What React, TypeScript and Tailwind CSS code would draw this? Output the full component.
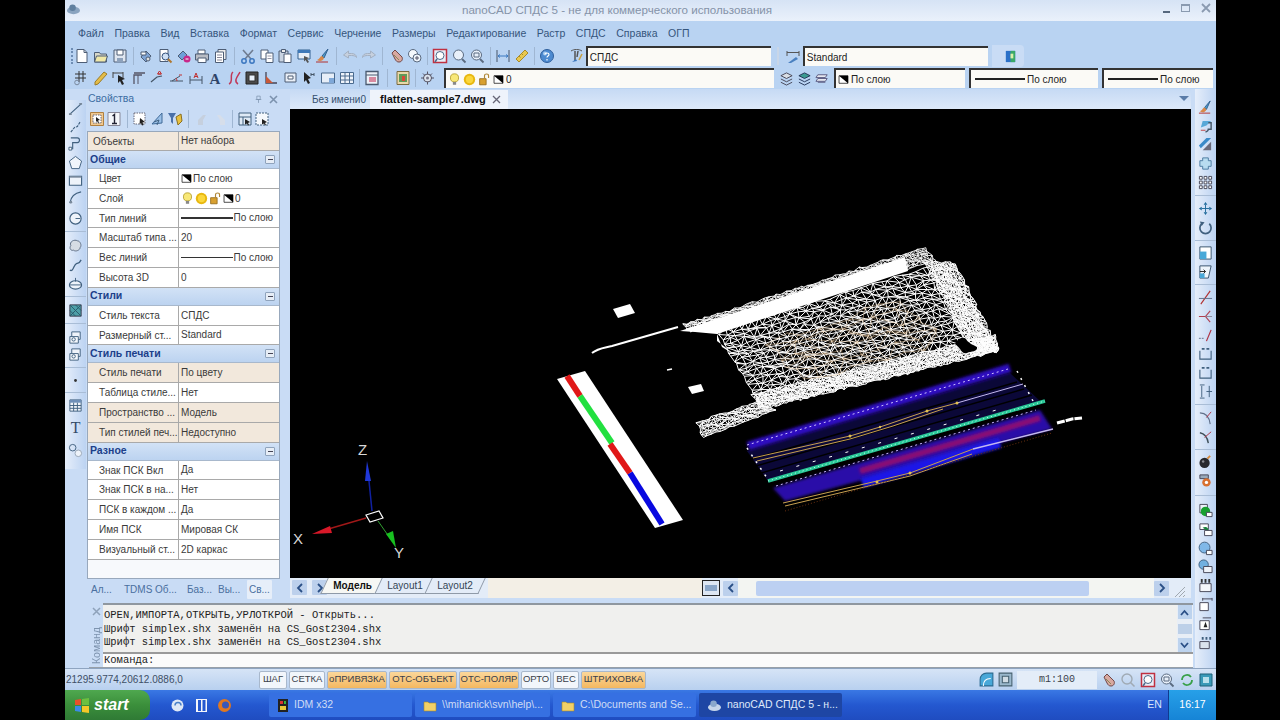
import { ReactNode } from "react"

const stroke = "#4d5d75"

const glyphs: Record<string, ReactNode> = {
  new: <><path d="M3 1.5h7l3 3v10H3z" fill="#fff" stroke={stroke} /><path d="M10 1.5v3h3" fill="none" stroke={stroke} /></>,
  open: <><path d="M1.5 4.5h5l1 1.5h6v8h-12z" fill="#d8d8c8" stroke={stroke} /><path d="M3.5 8h11l-2 6h-11z" fill="#f0e8a8" stroke={stroke} /></>,
  save: <><path d="M2 2h12v12H2z" fill="#dfe6f0" stroke={stroke} /><path d="M5 2h6v5H5z" fill="#fff" stroke={stroke} /><path d="M5 10h6v4H5z" fill="#8ea2bc" /></>,
  plot: <><path d="M3 9l5-6 5 5-5 6z" fill="#7fa4d4" stroke={stroke} /><path d="M3 4h5v3H3z" fill="#fff" stroke={stroke} /><circle cx="10" cy="11" r="2" fill="#e0e0e0" stroke={stroke} /></>,
  preview: <><path d="M3 1.5h8v12H3z" fill="#fff" stroke={stroke} /><circle cx="8.5" cy="8.5" r="3.5" fill="#cfe0f4" stroke="#33507a" /><path d="M11 11l3.5 3.5" stroke="#b07830" strokeWidth="2" /></>,
  plot2: <><path d="M2 8l5-5 4 4-5 5z" fill="#6f9fd8" stroke={stroke} /><circle cx="11" cy="11" r="3.5" fill="#c8288a" /><path d="M9.5 11h3" stroke="#fff" /></>,
  print: <><path d="M4 2h7v4H4z" fill="#fff" stroke={stroke} /><path d="M1.5 6h13v6h-13z" fill="#b8bcc4" stroke={stroke} /><path d="M4 10h8v4.5H4z" fill="#fff" stroke={stroke} /></>,
  print2: <><path d="M5 1.5h8v10H5z" fill="#eee" stroke={stroke} /><path d="M2.5 4h8v10.5h-8z" fill="#fff" stroke={stroke} /><path d="M4 7h5M4 9.5h5M4 12h5" stroke="#889" /></>,
  cut: <><path d="M3 2l8 9M13 2l-8 9" stroke="#6f7c90" strokeWidth="1.6" /><circle cx="4" cy="13" r="2.2" fill="none" stroke="#3d78c0" strokeWidth="1.5" /><circle cx="12" cy="13" r="2.2" fill="none" stroke="#3d78c0" strokeWidth="1.5" /></>,
  copy: <><path d="M2 2h7v9H2z" fill="#fff" stroke={stroke} /><path d="M7 5h7v9.5H7z" fill="#fff" stroke={stroke} /><path d="M8.5 8h4M8.5 10.5h4" stroke="#99a" /></>,
  paste: <><path d="M2 3h9v11H2z" fill="#c9d4e2" stroke={stroke} /><path d="M4.5 1.5h4v3h-4z" fill="#eee" stroke={stroke} /><path d="M7 6h7v8.5H7z" fill="#fff" stroke={stroke} /></>,
  card: <><path d="M2 2h12v9H2z" fill="#e6eef8" stroke="#33608f" /><path d="M2 2h12v3H2z" fill="#3d78b8" /><path d="M8 8l5 2-2 1 2 3-1.5 1-2-3-1.5 1.5z" fill="#555" /></>,
  undo: <><path d="M1.5 7l5-4v2.5h3c3 0 5 1.5 5 4-1-1.5-3-2-5-2h-3V10z" fill="#c6d0de" stroke="#a3b0c2" /></>,
  redo: <><path d="M14.5 7l-5-4v2.5h-3c-3 0-5 1.5-5 4 1-1.5 3-2 5-2h3V10z" fill="#c6d0de" stroke="#a3b0c2" /></>,
  hand: <><path d="M3 5l3-3 7 7c1 2 0 5-3 5-2 0-3-1-4-3z" fill="#d8a8a0" stroke="#704848" /><path d="M5 7l5 5" stroke="#885" /></>,
  zoomRt: <><circle cx="6" cy="6" r="4.5" fill="#f4f8fc" stroke="#5a6a80" /><circle cx="10" cy="10" r="4" fill="#eef4fa" stroke="#5a6a80" /><path d="M8 10h4M10 8v4" stroke="#556" /></>,
  zoomWin: <><path d="M1.5 1.5h13v13h-13z" fill="#e8eef8" stroke="#c03040" strokeWidth="1.5" /><circle cx="8" cy="7.5" r="4" fill="#fff" stroke="#4d6a8a" /><path d="M5 11l-2 3" stroke="#4d6a8a" strokeWidth="1.5" /></>,
  zoomPrev: <><circle cx="7.5" cy="7" r="5" fill="#e8f0fa" stroke="#5a6a80" /><path d="M11 11l3.5 3.5" stroke="#5a6a80" strokeWidth="1.8" /></>,
  zoomAll: <><circle cx="7.5" cy="7" r="5" fill="#e8f0fa" stroke="#5a6a80" /><path d="M5 5h5v4H5z" fill="none" stroke="#5a6a80" /><path d="M11 11l3.5 3.5" stroke="#5a6a80" strokeWidth="1.8" /></>,
  dim: <><path d="M2 2v12M14 2v12" stroke="#5a6a80" strokeWidth="1.2" /><path d="M3 8h10M3 8l2-1.5M3 8l2 1.5M13 8l-2-1.5M13 8l-2 1.5" stroke="#3a78c0" /></>,
  ruler: <><path d="M2 11l9-9 3 3-9 9z" fill="#e8c850" stroke="#a88a28" /><path d="M5 8l1.5 1.5M7.5 5.5L9 7" stroke="#a88a28" /></>,
  help: <><circle cx="8" cy="8" r="6.5" fill="#4c8ad0" stroke="#2f5f9c" /><circle cx="6" cy="5.5" r="2" fill="#a8ccf0" /><path d="M6 6.5c0-2 4-2 4 0 0 1.5-2 1.5-2 3M8 11v1.5" fill="none" stroke="#fff" strokeWidth="1.2" /></>,
  txtStyle: <><path d="M3 3c3-2 8-2 11 0" fill="none" stroke="#555" /><path d="M7 3v10M10 3L9 9" stroke="#555" strokeWidth="1.5" /><path d="M4 14l4-3 1 2z" fill="#3a78c0" /><path d="M11 12l3-6" stroke="#c9a040" strokeWidth="1.6" /></>,
  dimStyle: <><path d="M2 3v5M14 3v5M2 4.5h12" stroke="#555" /><path d="M3 15l8-6 2 2-7 4z" fill="#4a80c0" /></>,
  book: <><path d="M3 2h10v12H3z" fill="#2a70c8" /><path d="M8 2h5v12H8z" fill="#38a868" /><path d="M8 5h3v5H8z" fill="#d8f0a8" /></>,
  grid: <><path d="M5 1v11M9 1v11M1 4h11M1 8h11" stroke="#333" /><circle cx="3" cy="12.5" r="2.3" fill="none" stroke="#7a8aa0" /></>,
  pencil: <><path d="M2 12L11 2l3 2-9 10-3 1z" fill="#e4bc48" stroke="#9a7c28" /></>,
  dimSel: <><path d="M1 2v6M11 2v6M1 3h10" stroke="#444" /><path d="M6 5l7 4-3 1 2 4-2 1-2-4-2 2z" fill="#222" /></>,
  ortho: <><path d="M3 14V5h8M3 3h11" stroke="#556" strokeWidth="1.3" fill="none" /><path d="M7 5v9" stroke="#556" /></>,
  aligned: <><path d="M1 12l6-5 5-1" fill="none" stroke="#456" strokeWidth="1.2" /><path d="M8 4h3M9.5 1l2 3h-4z" fill="none" stroke="#c03030" /></>,
  angular: <><path d="M1 11h13M3 11l8-5" stroke="#456" /><path d="M8 11c0-1-.5-2-1-3" fill="none" stroke="#c03030" /><path d="M10 5h3" stroke="#c03030" /></>,
  linA: <><path d="M2 6v8M14 6v8M2 10h12" stroke="#456" /><path d="M6 8l2-5 2 5M6.8 6.5h2.4" stroke="#c03030" fill="none" /></>,
  letter: <text x="8" y="13.5" textAnchor="middle" fontSize="15" fontWeight="700" fontFamily="'Liberation Serif', serif" fill="#2f4468">A</text>,
  bigT: <text x="8" y="14" textAnchor="middle" fontSize="17" fontFamily="'Liberation Serif', serif" fill="#334a66">T</text>,
  curve: <><path d="M3 14c5-2 0-9 4-12M12 14c-5-3 0-8 2-12" fill="none" stroke="#c03858" strokeWidth="1.5" /></>,
  hatch: <><path d="M2 2h12v12H2z" fill="#4a4a4a" stroke="#222" /><path d="M5 5h6v6H5z" fill="#e8f0fa" stroke="#333" /></>,
  corner: <><path d="M3 2v11h11" fill="none" stroke="#445" strokeWidth="1.3" /><path d="M3 13V6l7 7z" fill="#c85838" /></>,
  flag: <><path d="M3 3h11v9H3z" fill="#e8eef6" stroke={stroke} /><path d="M6 6h5v3H6z" fill="#fff" stroke={stroke} /></>,
  cursor: <><path d="M3 2l7 6-3 1 2 4-2 1-2-4-2 2z" fill="#222" /><path d="M10 3v3M13 3v3M10 4.5h3" stroke="#456" /></>,
  win1: <><path d="M1.5 3h13v10h-13z" fill="#e6eef8" stroke="#4a6a8e" /><path d="M9 8h5v5H9z" fill="#7fa8d8" /></>,
  win2: <><path d="M1.5 2.5h13v11h-13z" fill="#eef3fa" stroke="#4a6a8e" /><path d="M1.5 6h13M1.5 10h13M6 2.5v11M10.5 2.5v11" stroke="#4a6a8e" /></>,
  frame: <><path d="M2 1.5h12v13H2z" fill="#eef2f8" stroke="#4a5a70" strokeWidth="1.3" /><path d="M2 5h12" stroke="#4a5a70" /><path d="M5 7h7v5H5z" fill="#d88aa0" /></>,
  clip: <><path d="M2 1.5h12v13H2z" fill="#e8d8a8" stroke="#7a6a40" /><path d="M4 4h8v8H4z" fill="#5f9a58" /><path d="M7 6h3v5H7z" fill="#d84838" /></>,
  gear: <><circle cx="7.5" cy="8" r="4" fill="#dce4ee" stroke="#556" /><path d="M7.5 1.5v3M7.5 11.5v3M1 8h3M11 8h3M3 3.5l2 2M12 3.5l-2 2" stroke="#556" /><circle cx="7.5" cy="8" r="1.5" fill="#778" /></>,
  bulb: <><circle cx="8" cy="6" r="5" fill="#f8e878" stroke="#b09a28" /><path d="M6 11h4v3.5H6z" fill="#888" /></>,
  sun: <><circle cx="8" cy="8" r="7" fill="#e8b810" /><circle cx="8" cy="8" r="4.5" fill="#fbd73c" /></>,
  lock: <><path d="M2 7h8v7.5H2z" fill="#d8a030" stroke="#906818" /><path d="M8 7V3.5c0-3 5-3 5 0V6" fill="none" stroke="#b08838" strokeWidth="1.4" /></>,
  color: <><path d="M1.5 2.5h13v11h-13z" fill="#fff" stroke="#000" /><path d="M1.5 2.5h13v11z" fill="#000" /></>,
  layer: <><path d="M2 5l6-3 6 3-6 3z" fill="#d8dde4" stroke="#445" /><path d="M2 8.5l6 3 6-3M2 12l6 3 6-3" fill="none" stroke="#445" /></>,
  layer2: <><path d="M2 5l6-3 6 3-6 3z" fill="#3a9a90" stroke="#235" /><path d="M2 8.5l6 3 6-3M2 12l6 3 6-3" fill="none" stroke="#235" /></>,
  layer3: <><path d="M3 4h10l-2 3H1zM3 8h10l-2 3H1z" fill="#e6e8f0" stroke="#5a5a80" /><path d="M3 12h8" stroke="#5a5a80" /></>,
  line: <><path d="M2 14L14 3" stroke="#40607f" strokeWidth="1.2" /><path d="M1 13h3v2H1zM12 2h3v2h-3z" fill="#7a8a9c" /></>,
  pline: <><path d="M3 14l4-5 3-1 3-5" fill="none" stroke="#40607f" strokeWidth="1.2" strokeDasharray="3 1" /></>,
  mline: <><path d="M3 2h7c3 0 3 5 0 5H5v7" fill="none" stroke="#40607f" strokeWidth="1.2" /><path d="M1 12h3v3H1z" fill="#fff" stroke="#40607f" /></>,
  poly: <><path d="M8 1.5l6.5 5-2.5 8H4l-2.5-8z" fill="#f0f5fb" stroke="#40607f" /></>,
  rect: <><path d="M1.5 3.5h13V13h-13z" fill="#eef3fa" stroke="#40607f" strokeWidth="1.2" /><path d="M1.5 3.5h13V5h-13z" fill="#7a8a9c" /></>,
  arc: <><path d="M2 14C3 7 8 3 14 2" fill="none" stroke="#40607f" strokeWidth="1.2" /><circle cx="3" cy="13" r="1.5" fill="#7a8a9c" /></>,
  circle: <><circle cx="8" cy="8" r="6" fill="#eef3fa" stroke="#40607f" strokeWidth="1.2" /><path d="M8 8h5" stroke="#40607f" /></>,
  cloud: <><path d="M3 8c-2-4 4-7 7-5 3 0 5 5 3 7 0 3-5 5-7 3-3 1-5-2-3-5z" fill="#d6dce4" stroke="#5a6a80" /></>,
  spline: <><path d="M2 13c4 2 4-6 7-7s3 0 5-4" fill="none" stroke="#40607f" strokeWidth="1.4" /></>,
  ellipse: <><ellipse cx="8" cy="9.5" rx="6.5" ry="4.5" fill="#eef3fa" stroke="#40607f" strokeWidth="1.2" /><path d="M8 2v4M1.5 9.5h13" stroke="#40607f" /></>,
  tile: <><path d="M2 2h12v12H2z" fill="#4ea0a8" stroke="#334" /><path d="M2 2l12 12M8 2l6 6M2 8l6 6M14 2L2 14" stroke="#2a5a6a" /></>,
  block: <><path d="M4 2h9v8H4z" fill="#eef3fa" stroke="#40607f" /><path d="M2 7h9v7H2z" fill="#f4f8fc" stroke="#40607f" /><circle cx="6" cy="10" r="1.8" fill="none" stroke="#40607f" /></>,
  dot: <><circle cx="8" cy="8" r="1.5" fill="#333" /></>,
  table: <><path d="M2 2h12v12H2z" fill="#f0f4fa" stroke="#40607f" /><path d="M2 2h12v3H2z" fill="#7090b8" /><path d="M2 8h12M2 11h12M6 5v9M10 5v9" stroke="#40607f" /></>,
  rings: <><circle cx="5" cy="5" r="3.5" fill="none" stroke="#40607f" /><circle cx="11" cy="11" r="3.5" fill="#eef3fa" stroke="#9aa8b8" /></>,
  paint: <><path d="M13 1L7 8l2 2z" fill="#4a9ac8" stroke="#33608f" /><path d="M7 8c-2 0-2 3-5 4 3 2 6 1 7-2z" fill="#d88848" /><path d="M1 14h12" stroke="#b03030" /></>,
  copy3: <><path d="M5 2L3 9l6-2 5-5z" fill="#58a8d8" /><path d="M11 4h3v7h-3c0 2-3 3-3 3" fill="none" stroke="#456" strokeWidth="1.5" /><path d="M3 12h5" stroke="#c04040" /></>,
  mirror: <><path d="M1 9l8-8h5L3 12z" fill="#3a8ac8" /><path d="M14 5v9H5z" fill="#6a6a7a" /></>,
  offset: <><path d="M5 2h6v3h3v6h-3v3H5v-3H2V5h3z" fill="#b8dcf0" stroke="#4a7aa0" /></>,
  array: <><path d="M1.5 1.5h3v3h-3zM6.5 1.5h3v3h-3zM11.5 1.5h3v3h-3zM1.5 6.5h3v3h-3zM6.5 6.5h3v3h-3zM11.5 6.5h3v3h-3zM1.5 11.5h3v3h-3zM6.5 11.5h3v3h-3zM11.5 11.5h3v3h-3z" fill="#fff" stroke="#445" /></>,
  move: <><path d="M8 1l2 3H6zM8 15l-2-3h4zM1 8l3-2v4zM15 8l-3 2V6z" fill="#1f6a9a" /><path d="M8 4v8M4 8h8" stroke="#1f6a9a" /></>,
  rotate: <><path d="M4 4a6 6 0 1 0 8 0" fill="none" stroke="#40607f" strokeWidth="1.8" /><path d="M2 1.5l5 1-3 4z" fill="#40607f" /></>,
  scale: <><path d="M2 2h12v13H2z" fill="#fff" stroke="#34506a" /><path d="M2 7h7v8H2z" fill="#48a8d8" /></>,
  stretch: <><path d="M2 2h12l-3 13H2z" fill="#eef5fb" stroke="#34506a" /><path d="M2 10h5v5H2z" fill="#48a8d8" /><path d="M2 8h6M6 6l2 2-2 2" stroke="#222" fill="none" /></>,
  trim: <><path d="M13 1L3 15" stroke="#b03030" strokeWidth="1.2" /><path d="M1 9h14" stroke="#60708a" /></>,
  extend: <><path d="M13 2L8 8l5 6M1 8h7" fill="none" stroke="#b04050" strokeWidth="1.2" /><path d="M8 8h7" stroke="#889" /></>,
  break: <><path d="M1 11h6" stroke="#60708a" strokeDasharray="2 1" /><path d="M14 2L9 14" stroke="#b03040" strokeWidth="1.3" /></>,
  join: <><path d="M2 5v9h12V5" fill="none" stroke="#40607f" strokeWidth="1.2" /><path d="M4 3h3M9 3h3" stroke="#40607f" strokeWidth="1.8" /></>,
  dimV: <><path d="M2 1h5M2 15h5M4 2v12" stroke="#40607f" /><path d="M9 8h6M12 2v12" stroke="#40607f" /></>,
  chamfer: <><path d="M2 3c6 0 10 4 11 12" fill="none" stroke="#60708a" strokeWidth="1.2" /><path d="M14 2L9 8" stroke="#b03040" /></>,
  fillet: <><path d="M2 4c6 1 8 5 9 11" fill="none" stroke="#40505a" strokeWidth="1.5" /><path d="M14 3L7 9" stroke="#b03040" /></>,
  bomb: <><circle cx="7" cy="9.5" r="5.5" fill="#28282c" /><circle cx="5.5" cy="8" r="1.3" fill="#8a8a90" /><path d="M10 5l3-3" stroke="#d88838" strokeWidth="2" /></>,
  bomb2: <><path d="M2 2h9v4H2z" fill="#9ab" stroke="#445" /><circle cx="9" cy="10" r="4.5" fill="#d87030" /><circle cx="9" cy="10" r="1.8" fill="#fff" /></>,
  green: <><path d="M2 1.5h8v9H2z" fill="#eef3fa" stroke="#445" /><circle cx="8" cy="9" r="5" fill="#18a030" /><path d="M9 10h6v4.5H9z" fill="#fff" stroke="#445" /></>,
  green2: <><path d="M2 2h9v6H2z" fill="#fff" stroke="#445" /><path d="M5 6c3-2 7 0 6 4z" fill="#18803a" /><path d="M7 9h8v5.5H7z" fill="#fff" stroke="#445" /></>,
  ball: <><circle cx="7" cy="7" r="5.8" fill="#80b8e8" stroke="#40607f" /><path d="M9 10h6v4.5H9z" fill="#fff" stroke="#445" /></>,
  ball2: <><circle cx="6" cy="6" r="5" fill="#70b0e0" stroke="#40607f" /><path d="M6 8h9v6.5H6z" fill="#eef3fa" stroke="#445" /></>,
  abc: <><path d="M2 6h12v8.5H2z" fill="#f4f6fa" stroke="#445" /><path d="M3 1h2v4H3zM7 1h2v4H7zM11 1h2v4h-2z" fill="#333" /></>,
  dimA: <><path d="M2 6h9v8.5H2z" fill="#fff" stroke="#445" /><path d="M5 2h10M5 1v3M15 1v3" stroke="#445" /></>,
  dimB: <><path d="M2 5h10v9.5H2z" fill="#fff" stroke="#445" /><path d="M6 12l2-6 2 6" fill="#222" /><path d="M5 2h9" stroke="#445" /></>,
  dimC: <><path d="M2 7h10v7.5H2z" fill="#dbe3ec" stroke="#445" /><path d="M4 2h2v3H4zM8 2h2v3H8zM12 2h2v3h-2z" fill="#40607f" /></>,
  pinIcon: <><path d="M5 2h6v6H5zM3 8h10M8 8v6" fill="none" stroke="#7d93ae" strokeWidth="1.3" /></>,
  select: <><path d="M1.5 1.5h13v13h-13z" fill="#f0c890" stroke="#b08040" /><path d="M4 4h8v8H4z" fill="#fff" stroke="#667" strokeDasharray="1.5 1" /><path d="M7 6l4 3-2 .5 1 2-1 .5-1-2-1 1z" fill="#222" /></>,
  one: <><path d="M2 1.5h12v13H2z" fill="#f4f6fa" stroke="#889" /><path d="M6.5 5L8.5 3.5v9M6 12.5h5" stroke="#223" strokeWidth="1.4" fill="none" /></>,
  selSet: <><path d="M2 2h11v11H2z" fill="#fff" stroke="#667" strokeDasharray="1.5 1" /><path d="M8 7l5 4-2.5.5 1 2.5-1.5.5-1-2.5-1.5 1.5z" fill="#222" /></>,
  quick: <><path d="M3 13L13 2v10z" fill="#9ac0e8" stroke="#406a98" /><path d="M5 11l5-2-2 5" fill="none" stroke="#40607f" /></>,
  filter: <><path d="M1 2h8L6 7v6L4 11V7z" fill="#4a70a8" /><path d="M9 6l5-3 1 7-4 4z" fill="#e8c040" stroke="#8a7020" /></>,
  arrowGray: <><path d="M3 14V9l5-5h3l-3 5v5z" fill="#c6d0de" /></>,
  arrowGray2: <><path d="M13 14V9L8 4H5l3 5v5z" fill="#d6deea" /></>,
  boxPlus: <><path d="M2 2h12v12H2z" fill="#dfeaf6" stroke="#40607f" /><path d="M2 6h12M6 6v8" stroke="#40607f" /><path d="M8 8l5 3-2 1 1 2-1 .5-1-2-2 1z" fill="#222" /></>,
  boxDash: <><path d="M2 2h12v12H2z" fill="#f4f8fc" stroke="#40607f" strokeDasharray="2 1" /><path d="M8 8l5 3-2 1 1 2-1 .5-1-2-2 1z" fill="#222" /></>,
  sat: <><path d="M2 14V8a6 6 0 0 1 6-6h6v12z" fill="#48a8d8" stroke="#2a6a90" /><path d="M5 14c0-5 3-7 7-7" fill="none" stroke="#fff" /></>,
  sat2: <><path d="M2 2h12v12H2z" fill="#9ab8cc" stroke="#46606f" /><path d="M5 5h6v6H5z" fill="#d0dce4" stroke="#46606f" /></>,
  zoomPlain: <><circle cx="7" cy="7" r="5" fill="none" stroke="#a0aab4" strokeWidth="1.4" /><path d="M10.5 10.5l4 4" stroke="#a0aab4" strokeWidth="1.6" /></>,
  refresh: <><path d="M3 8a5 5 0 0 1 9-3" fill="none" stroke="#38a048" strokeWidth="1.8" /><path d="M13 8a5 5 0 0 1-9 3" fill="none" stroke="#38a048" strokeWidth="1.8" /></>,
  fit: <><path d="M2 2h12v12H2z" fill="#3a9ab8" stroke="#1f6078" /><path d="M5 5h6v6H5z" fill="#b8e0ec" /></>,
}

function G({ n, s = 16 }: { n: string; s?: number }) {
  return (
    <svg width={s} height={s} viewBox="0 0 16 16" className="shrink-0">
      {glyphs[n]}
    </svg>
  )
}

type Slot = string | number

// a number in the list is a gap, a name is an icon in its slot
function ToolStrip({ items, w = 19 }: { items: Slot[]; w?: number }) {
  return (
    <div className="flex items-center">
      {items.map((it, i) =>
        typeof it === "number" ? (
          <div key={i} style={{ width: it }} className="flex h-[18px] shrink-0 justify-center">
            <div className="h-full w-px bg-[#9fb6d2]" />
          </div>
        ) : (
          <div key={i} style={{ width: w }} className="flex shrink-0 justify-center">
            <G n={it} />
          </div>
        ),
      )}
    </div>
  )
}

function VStrip({ items, slot }: { items: Slot[]; slot: number }) {
  return (
    <div className="flex w-[21px] flex-col items-center">
      {items.map((it, i) =>
        typeof it === "number" ? (
          <div key={i} style={{ height: it }} className="flex w-full shrink-0 items-center">
            {it >= 6 && <div className="h-px w-full bg-[#a9bdd6]" />}
          </div>
        ) : (
          <div key={i} style={{ height: slot }} className="flex shrink-0 items-center justify-center">
            <G n={it} s={15} />
          </div>
        ),
      )}
    </div>
  )
}

function Combo({ children, w }: { children: ReactNode; w: number }) {
  return (
    <div
      style={{ width: w }}
      className="flex h-[20px] shrink-0 items-center gap-[2px] border-t-2 border-l-2 border-t-[#333] border-l-[#333] bg-[#fbfaf6] pl-[2px] text-[10px] whitespace-nowrap text-[#222]"
    >
      {children}
    </div>
  )
}

function LineSample() {
  return <div className="h-[1.5px] w-[50px] shrink-0 bg-[#222]" />
}

function TitleBar() {
  return (
    <div className="relative flex h-[21px] items-center justify-center bg-gradient-to-b from-[#d6e3f5] to-[#eaf1fb] pb-[2px] text-[11.6px] text-[#8593a8]">
      <svg width="15" height="13" viewBox="0 0 16 14" className="absolute top-[3px] left-[1px]">
        <ellipse cx="8" cy="8" rx="7" ry="4" fill="#8aa4c0" />
        <circle cx="7" cy="5" r="3.5" fill="#5f7f9f" />
      </svg>
      <span className="pr-[47px]">nanoCAD СПДС 5 - не для коммерческого использования</span>
      <div className="absolute top-[3px] right-[5px] flex items-center gap-[11px]">
        <div className="mt-[8px] h-[2px] w-[7px] bg-[#56687e]" />
        <div className="h-[8px] w-[9px] border border-t-2 border-[#8a9ab0]" />
        <svg width="10" height="10" viewBox="0 0 10 10"><path d="M1 1l8 8M9 1l-8 8" stroke="#8a9ab0" strokeWidth="1.8" /></svg>
      </div>
    </div>
  )
}

const menus = ["Файл", "Правка", "Вид", "Вставка", "Формат", "Сервис", "Черчение", "Размеры", "Редактирование", "Растр", "СПДС", "Справка", "ОГП"]

function MenuBar() {
  return (
    <div className="flex h-[24px] items-center gap-[10.6px] bg-[#b9d3f2] pt-[2px] pl-[13px] text-[10.5px] text-[#35557c]">
      {menus.map((m) => (
        <span key={m}>{m}</span>
      ))}
    </div>
  )
}

function Grip() {
  return <div className="ml-[6px] h-[16px] w-[2px] shrink-0 border-l-2 border-dotted border-[#6e8db4]" />
}

function ToolRowOne() {
  return (
    <div className="flex h-[22px] items-center bg-[#b9d3f2]">
      <Grip />
      <ToolStrip
        w={18.7}
        items={[
          "new", "open", "save", 8, "plot", "preview", "plot2", "print", "print2", 8,
          "cut", "copy", "paste", "card", "paint", 9, "undo", "redo", 9,
          "hand", "zoomRt", 6, "zoomWin", "zoomPrev", "zoomAll", 7, "dim", "ruler", 7, "help",
        ]}
      />
      <div className="ml-[11px]"><G n="txtStyle" /></div>
      <div className="ml-[2px]">
        <Combo w={185}>СПДС</Combo>
      </div>
      <div className="mx-[6px] h-[18px] w-[2px] bg-[#c8d6e8]" />
      <G n="dimStyle" />
      <div className="ml-[2px]">
        <Combo w={185}>Standard</Combo>
      </div>
      <div className="ml-[4px] flex h-[22px] w-[32px] items-center justify-end rounded-r bg-[#c9dcf5] pr-[6px]">
        <G n="book" s={15} />
      </div>
    </div>
  )
}

function ToolRowTwo() {
  return (
    <div className="flex h-[22px] items-center overflow-hidden bg-[#b9d3f2]">
      <div className="ml-[8px]" />
      <ToolStrip
        w={18.9}
        items={[
          "grid", "pencil", "dimSel", "ortho", "aligned", "angular", "linA", "letter", "curve", "hatch", "corner", "flag", "cursor", "win1", "win2", 6, "frame", 12, "clip", 6, "gear",
        ]}
      />
      <div className="ml-[7px]">
        <Combo w={330}>
          <G n="bulb" s={13} />
          <G n="sun" s={13} />
          <G n="lock" s={13} />
          <G n="color" s={11} />
          <span>0</span>
        </Combo>
      </div>
      <div className="ml-[3px] flex w-[55px] shrink-0 justify-around">
        <G n="layer" s={15} />
        <G n="layer2" s={15} />
        <G n="layer3" s={15} />
      </div>
      <div className="ml-[2px] flex gap-[4px]">
        <Combo w={131}>
          <G n="color" s={11} />
          <span>По слою</span>
        </Combo>
        <Combo w={129}>
          <span className="ml-[2px] flex items-center gap-[2px]"><LineSample /> По слою</span>
        </Combo>
        <Combo w={111}>
          <span className="ml-[2px] flex items-center gap-[2px]"><LineSample /> По слою</span>
        </Combo>
      </div>
    </div>
  )
}

function SectionHead({ title }: { title: string }) {
  return (
    <div className="flex h-[18px] items-center justify-between border-b border-[#a8b8cc] bg-gradient-to-b from-[#d2e2f6] to-[#bcd3f0] pr-[4px] pl-[2px] text-[10.5px] font-bold text-[#1c3f8a]">
      <span>{title}</span>
      <div className="flex h-[9px] w-[10px] items-center justify-center rounded-[1px] border border-[#8fa3bc] bg-[#e6edf6]">
        <div className="h-px w-[5px] bg-[#445]" />
      </div>
    </div>
  )
}

function PropRow({ label, children, tint }: { label: string; children: ReactNode; tint?: boolean }) {
  return (
    <div className={`flex h-[19.8px] items-center border-b border-[#a9a9a9] ${tint ? "bg-[#f2e8dc]" : "bg-white"}`}>
      <div className="h-full w-[91px] shrink-0 border-r border-[#a9a9a9] pl-[11px] leading-[19px] whitespace-nowrap">{label}</div>
      <div className="flex min-w-0 flex-1 items-center gap-[1px] pl-[2px] whitespace-nowrap">{children}</div>
    </div>
  )
}

function LineValue() {
  return (
    <div className="flex w-full items-center justify-between pr-[6px]">
      <div className="h-[1.5px] w-[52px] bg-[#333]" />
      <span>По слою</span>
    </div>
  )
}

function PropertiesPanel() {
  return (
    <div className="flex w-[195px] shrink-0 flex-col bg-[#c9dcf5]">
      <div className="flex h-[19px] items-center justify-between pt-[1px] pr-[3px] pl-[2px] text-[10.5px] text-[#3d6ea3]">
        <span>Свойства</span>
        <div className="flex items-center gap-[6px]">
          <G n="pinIcon" s={9} />
          <svg width="9" height="9" viewBox="0 0 9 9"><path d="M1 1l7 7M8 1L1 8" stroke="#7d93ae" strokeWidth="1.6" /></svg>
        </div>
      </div>
      <div className="flex h-[22.5px] items-center pl-[2px]">
        <ToolStrip items={["select", "one", 8, "selSet", "quick", "filter", 10.5, "arrowGray", "arrowGray2", 7, "boxPlus", "boxDash"]} w={17.5} />
      </div>
      <div className="mx-px border border-[#98a8bc] text-[10px] text-[#3a3a3a]">
        <div className="flex h-[19.5px] items-center border-b border-[#a9a9a9] bg-[#f2e8dc]">
          <div className="h-full w-[91px] shrink-0 border-r border-[#a9a9a9] pl-[5px] leading-[19px]">Объекты</div>
          <div className="pl-[2px]">Нет набора</div>
        </div>
        <SectionHead title="Общие" />
        <PropRow label="Цвет"><G n="color" s={11} />По слою</PropRow>
        <PropRow label="Слой"><G n="bulb" s={13} /><G n="sun" s={13} /><G n="lock" s={13} /><G n="color" s={11} />0</PropRow>
        <PropRow label="Тип линий"><LineValue /></PropRow>
        <PropRow label="Масштаб типа ...">20</PropRow>
        <PropRow label="Вес линий"><LineValue /></PropRow>
        <PropRow label="Высота 3D">0</PropRow>
        <SectionHead title="Стили" />
        <PropRow label="Стиль текста">СПДС</PropRow>
        <PropRow label="Размерный ст...">Standard</PropRow>
        <SectionHead title="Стиль печати" />
        <PropRow label="Стиль печати" tint>По цвету</PropRow>
        <PropRow label="Таблица стиле...">Нет</PropRow>
        <PropRow label="Пространство ..." tint>Модель</PropRow>
        <PropRow label="Тип стилей печ..." tint>Недоступно</PropRow>
        <SectionHead title="Разное" />
        <PropRow label="Знак ПСК Вкл">Да</PropRow>
        <PropRow label="Знак ПСК в на...">Нет</PropRow>
        <PropRow label="ПСК в каждом ...">Да</PropRow>
        <PropRow label="Имя ПСК">Мировая СК</PropRow>
        <PropRow label="Визуальный ст...">2D каркас</PropRow>
        <div className="h-[18px] bg-[#f7f9fc]" />
      </div>
      <div className="mt-px flex h-[19px] items-center pl-[3px] text-[10px] text-[#4a6f9e]">
        <span className="w-[35px] pl-[2px]">Ал...</span>
        <span className="w-[31px]">TDMS</span>
        <span className="w-[32px]">Об...</span>
        <span className="w-[31px]">Баз...</span>
        <span className="w-[29px]">Вы...</span>
        <span className="rounded-[1px] bg-[#e6eef9] px-[2px] py-[2px]">Св...</span>
      </div>
    </div>
  )
}

// small seeded generator so the mesh stays the same on every render
function rng(seed: number) {
  let s = seed
  return () => {
    s = (s * 16807) % 2147483647
    return s / 2147483647
  }
}

type P = [number, number]

function meshPath(a: P, b: P, c: P, d: P, nu: number, nv: number, jitter: number, seed: number) {
  const r = rng(seed)
  const pts: P[][] = []
  for (let i = 0; i <= nu; i++) {
    const row: P[] = []
    for (let j = 0; j <= nv; j++) {
      const u = i / nu
      const v = j / nv
      const x = (1 - v) * ((1 - u) * a[0] + u * b[0]) + v * ((1 - u) * d[0] + u * c[0])
      const y = (1 - v) * ((1 - u) * a[1] + u * b[1]) + v * ((1 - u) * d[1] + u * c[1])
      row.push([x + (r() - 0.5) * jitter, y + (r() - 0.5) * jitter])
    }
    pts.push(row)
  }
  let out = ""
  const seg = (p: P, q: P) => `M${p[0].toFixed(1)} ${p[1].toFixed(1)}L${q[0].toFixed(1)} ${q[1].toFixed(1)}`
  for (let i = 0; i < nu; i++) {
    for (let j = 0; j < nv; j++) {
      out += seg(pts[i][j], pts[i + 1][j]) + seg(pts[i][j], pts[i][j + 1])
      out += r() > 0.5 ? seg(pts[i][j], pts[i + 1][j + 1]) : seg(pts[i + 1][j], pts[i][j + 1])
    }
  }
  for (let i = 0; i < nu; i++) out += seg(pts[i][nv], pts[i + 1][nv])
  for (let j = 0; j < nv; j++) out += seg(pts[nu][j], pts[nu][j + 1])
  return out
}

const meshMain = meshPath([717, 331], [945, 262], [998, 350], [762, 405], 32, 18, 3.5, 11)
const meshTop = meshPath([684, 324], [925, 246], [935, 260], [690, 330], 70, 5, 2.5, 23)
const meshLobe = meshPath([697, 421], [758, 401], [775, 409], [703, 437], 16, 6, 2.2, 37)
const meshRight = meshPath([925, 260], [955, 262], [999, 350], [972, 354], 11, 32, 3, 53)
const meshBottom = meshPath([752, 394], [996, 334], [998, 350], [762, 408], 80, 6, 2.5, 71)
const meshSpecks = meshPath([770, 340], [900, 300], [940, 340], [800, 380], 8, 5, 9, 91)

function Drawing() {
  return (
    <svg viewBox="291 108 899 469" className="block h-[469px] w-[899px] bg-black">
      <defs>
        <filter id="soft" x="-10%" y="-50%" width="120%" height="200%">
          <feGaussianBlur stdDeviation="1.5" />
        </filter>
      </defs>

      {/* road strip */}
      <path d="M557 378L585 370L683 519L655 527Z" fill="#fff" />
      <path d="M567 375L580 395" stroke="#e01818" strokeWidth="6" />
      <path d="M580 395L612 442" stroke="#22e040" strokeWidth="6" />
      <path d="M610 443L630 472" stroke="#e01818" strokeWidth="6" />
      <path d="M630 472L662 523" stroke="#0808e0" strokeWidth="6" />

      {/* loose bits */}
      <path d="M613 308L630 303L635 312L618 317Z" fill="#fff" />
      <path d="M688 386L701 383L704 390L692 393Z" fill="#fff" />
      <path d="M667 369l5-1" stroke="#fff" strokeWidth="1.5" />
      <path d="M592 352c6-5 12-5 20-7l66-19" fill="none" stroke="#fff" strokeWidth="2" />
      <path d="M1057 422l15-4 10-1" fill="none" stroke="#fff" strokeWidth="3" strokeDasharray="8 1" />

      {/* terrain mesh */}
      <path d={meshTop} stroke="#fff" strokeWidth="0.9" fill="none" />
      <path d={meshMain} stroke="#fff" strokeWidth="1" fill="none" />
      <path d={meshLobe} stroke="#fff" strokeWidth="1" fill="none" />
      <path d={meshRight} stroke="#fff" strokeWidth="1" fill="none" />
      <path d={meshBottom} stroke="#fff" strokeWidth="1" fill="none" />
      <path d={meshSpecks} stroke="#e8c8a0" strokeWidth="0.5" fill="none" />
      <path d="M680 330L905 256L908 270L717 333L695 331Z" fill="#fff" />
      <path d="M717 333L722 346L738 356L717 340Z" fill="#fff" />
      <path d="M955 343c2-5 8-8 11-5 1 3 7 6 11 8 1 5-6 4-10 6-5 2-6-5-12-9z" fill="#000" />

      {/* road surface with the design lines */}
      <path d="M747 450L1010 372L1040 400L768 480Z" fill="#0b0838" />
      <g stroke="#000" strokeWidth="1.5">
        <path d="M752 458L1017 381" />
        <path d="M756 465L1024 388" />
        <path d="M761 472L1032 394" />
      </g>
      <path d="M748 445L1010 367" stroke="#2e0cc0" strokeWidth="9" filter="url(#soft)" />
      <path d="M773 487L1040 409L1052 428L785 500Z" fill="#2a10a8" filter="url(#soft)" />
      <path d="M860 470L1040 417" stroke="#8a0a74" strokeWidth="6" filter="url(#soft)" />
      <path d="M862 482L1000 442" stroke="#1a18e8" strokeWidth="10" filter="url(#soft)" />
      <path d="M747 444L1008 368" stroke="#d0c4ff" strokeWidth="1" strokeDasharray="2 3" />
      <path d="M776 485L1036 409" stroke="#c8b8ff" strokeWidth="1" strokeDasharray="2 3" />
      <path d="M780 470L1000 408" stroke="#fff" strokeWidth="1" strokeDasharray="3 14" />
      <path d="M747 447L767 477" stroke="#fff" strokeWidth="1.5" strokeDasharray="2 6" />
      <path d="M1017 370L1033 400" stroke="#fff" strokeWidth="1.5" strokeDasharray="2 6" />
      <path d="M768 480L1045 400" stroke="#2ac898" strokeWidth="3.5" />
      <path d="M768 480L1045 400" stroke="#d0fff0" strokeWidth="1" strokeDasharray="1 3" />
      <g fill="none" strokeWidth="1">
        <path d="M753 457L850 435L880 426L927 410L957 402" stroke="#c8a050" />
        <path d="M957 402L1023 383" stroke="#c4b8f0" />
        <path d="M757 460L850 438L893 425L943 408" stroke="#c8a050" />
        <path d="M783 502L877 480L910 472L973 448" stroke="#c8a050" />
        <path d="M973 448L1053 428" stroke="#c4b8f0" strokeWidth="1.3" />
        <path d="M785 505L877 483L910 475L972 453" stroke="#c8a050" />
        <path d="M785 510L1052 432" stroke="#6a3010" strokeDasharray="1 2" />
      </g>
      <g fill="#e0c050">
        <circle cx="850" cy="435" r="1.5" />
        <circle cx="880" cy="426" r="1.2" />
        <circle cx="927" cy="410" r="1.5" />
        <circle cx="957" cy="402" r="1.5" />
        <circle cx="877" cy="481" r="1.5" />
        <circle cx="910" cy="472" r="1.5" />
      </g>

      {/* UCS icon */}
      <path d="M372 510L369 480" stroke="#1020a0" strokeWidth="1.5" />
      <path d="M367 460l-2 20h6z" fill="#2038d8" />
      <path d="M366 517L325 529" stroke="#a01818" strokeWidth="1.5" />
      <path d="M312 533l18-8 2 7z" fill="#d81828" />
      <path d="M378 520L392 540" stroke="#30a030" strokeWidth="1" />
      <path d="M396 547l-10-14 7-3z" fill="#18c020" />
      <path d="M366 514L379 510L383 517L370 521Z" fill="#000" stroke="#fff" strokeWidth="1.2" />
      <text x="358" y="454" fill="#d8d8d8" fontSize="15" fontFamily="'Liberation Sans', sans-serif">Z</text>
      <text x="293" y="543" fill="#d8d8d8" fontSize="15" fontFamily="'Liberation Sans', sans-serif">X</text>
      <text x="394" y="557" fill="#d8d8d8" fontSize="15" fontFamily="'Liberation Sans', sans-serif">Y</text>
    </svg>
  )
}

function NavBtn({ dir }: { dir: "l" | "r" }) {
  return (
    <div className="flex h-[15px] w-[15px] shrink-0 items-center justify-center rounded-[1px] bg-[#bcd0ec]">
      <svg width="8" height="10" viewBox="0 0 8 10">
        <path d={dir === "l" ? "M6 1L2 5l4 4" : "M2 1l4 4-4 4"} fill="none" stroke="#2a4f86" strokeWidth="1.8" />
      </svg>
    </div>
  )
}

function SheetTab({ label, active }: { label: string; active?: boolean }) {
  return (
    <div className={`-ml-[3px] flex h-[16px] -skew-x-[25deg] items-center border-x border-b border-[#8f9aa8] px-[8px] ${active ? "bg-[#f6f7f4] font-bold text-[#111]" : "bg-[#e3ecf8] text-[#345]"}`}>
      <span className="skew-x-[25deg]">{label}</span>
    </div>
  )
}

function DocArea() {
  return (
    <div className="flex w-[901px] shrink-0 flex-col">
      <div className="relative flex h-[20px] items-end bg-gradient-to-b from-[#c6daf4] to-[#dde9f9] pl-[22px] text-[10px]">
        <span className="pb-[2px] text-[#34506e]">Без имени0</span>
        <div className="ml-[4px] flex h-[19px] w-[138px] items-center bg-[#eef3fb] pl-[10px]">
          <span className="text-[11px] font-bold text-[#111]">flatten-sample7.dwg</span>
          <svg width="9" height="9" viewBox="0 0 9 9" className="ml-[6px]"><path d="M1 1l7 7M8 1L1 8" stroke="#667" strokeWidth="1.3" /></svg>
        </div>
        <div className="absolute top-[7px] right-[2px] h-0 w-0 border-x-[5px] border-t-[5px] border-x-transparent border-t-[#5a7ca8]" />
      </div>
      <div className="border-x border-black">
        <Drawing />
      </div>
      <div className="flex h-[20px] items-center bg-[#e3ecf8] text-[10px]">
        <div className="flex h-full w-[412px] shrink-0 items-start">
          <div className="flex gap-[5px] pt-[2px] pl-[2px]">
            <NavBtn dir="l" />
            <NavBtn dir="r" />
          </div>
          <div className="flex">
            <SheetTab label="Модель" active />
            <SheetTab label="Layout1" />
            <SheetTab label="Layout2" />
          </div>
          <div className="ml-[6px] h-full flex-1 bg-[#f3efe6]" />
        </div>
        <div className="flex h-[16px] w-[18px] shrink-0 items-center justify-center border border-[#222] bg-[#dde6f2]">
          <div className="h-[6px] w-[12px] bg-[#8aa6c8]" />
        </div>
        <div className="ml-[3px]"><NavBtn dir="l" /></div>
        <div className="flex h-full flex-1 items-center bg-[#f3f5f2] pl-[18px]">
          <div className="h-[15px] w-[333px] rounded-[2px] bg-[#bcd0f2]" />
        </div>
        <NavBtn dir="r" />
        <div className="flex h-full w-[22px] shrink-0 items-end justify-center bg-[#e3ecf8]">
          <svg width="12" height="12" viewBox="0 0 12 12"><path d="M1 11L11 1M5 11l6-6M9 11l2-2" stroke="#a0a8b0" /></svg>
        </div>
      </div>
    </div>
  )
}

function CommandWindow() {
  return (
    <div className="ml-[24px] flex h-[65px] w-[1104px] border-b border-[#98a0a8]">
      <div className="flex w-[14px] shrink-0 flex-col items-center pt-[4px] text-[#7d93ae]">
        <svg width="9" height="9" viewBox="0 0 9 9"><path d="M1 1l7 7M8 1L1 8" stroke="#8ea2ba" strokeWidth="1.5" /></svg>
        <div className="mt-[3px] h-[45px] rotate-180 text-[10.5px] leading-[12px] whitespace-nowrap [writing-mode:vertical-rl]">Команд</div>
      </div>
      <div className="flex min-w-0 flex-1 flex-col border-t-2 border-[#8f979f] font-['Liberation_Mono',monospace]">
        <div className="flex h-[47px] bg-[#f0f0ee] text-[10.5px] leading-[13.5px] text-[#222]">
          <div className="flex-1 overflow-hidden pt-[4px] pl-[1px]">
            <div className="whitespace-pre">OPEN,ИМПОРТА,ОТКРЫТЬ,УРЛОТКРОЙ - Открыть...</div>
            <div className="whitespace-pre">Шрифт simplex.shx заменён на CS_Gost2304.shx</div>
            <div className="whitespace-pre">Шрифт simplex.shx заменён на CS_Gost2304.shx</div>
          </div>
          <div className="flex w-[16px] flex-col items-center justify-between bg-[#e8eef6] pr-[1px]">
            <div className="flex h-[14px] w-[14px] items-center justify-center bg-[#bdd3ee]"><svg width="9" height="7" viewBox="0 0 9 7"><path d="M1 6l3.5-4L8 6" fill="none" stroke="#2a4f86" strokeWidth="1.8" /></svg></div>
            <div className="h-[10px] w-[14px] bg-[#bdd0e8]" />
            <div className="flex h-[14px] w-[14px] items-center justify-center bg-[#bdd3ee]"><svg width="9" height="7" viewBox="0 0 9 7"><path d="M1 1l3.5 4L8 1" fill="none" stroke="#2a4f86" strokeWidth="1.8" /></svg></div>
          </div>
        </div>
        <div className="flex-1 border-t-2 border-[#9a9a9a] bg-[#fbfbfb] pl-[1px] text-[10.5px] leading-[13px] text-[#222]">Команда:</div>
      </div>
    </div>
  )
}

const statusButtons: [string, number, boolean][] = [
  ["ШАГ", 28, false],
  ["СЕТКА", 36, false],
  ["оПРИВЯЗКА", 60, true],
  ["ОТС-ОБЪЕКТ", 68, true],
  ["ОТС-ПОЛЯР", 60, true],
  ["ОРТО", 30, false],
  ["ВЕС", 26, false],
  ["ШТРИХОВКА", 65, true],
]

function StatusBar() {
  return (
    <div className="flex h-[22px] items-center border-t border-[#8ea4c0] bg-gradient-to-b from-[#d6e4f6] to-[#b8d0ef] text-[10px] text-[#3a3f4a]">
      <span className="w-[194px] pl-[1px] text-[#3e4f66]">21295.9774,20612.0886,0</span>
      <div className="flex gap-[2px]">
        {statusButtons.map(([label, w, on]) => (
          <div
            key={label}
            style={{ width: w }}
            className={`flex h-[18px] items-center justify-center rounded-[2px] border border-[#a8b8cc] text-[9.5px] whitespace-nowrap ${on ? "bg-gradient-to-b from-[#fbd79a] to-[#f4b860]" : "bg-[#f2f6fb]"}`}
          >
            {label}
          </div>
        ))}
      </div>
      <div className="ml-[332px] flex items-center gap-[2px]">
        <G n="sat" s={17} />
        <G n="sat2" s={17} />
        <div className="ml-[1px] flex h-[18px] w-[80px] items-center justify-center bg-[#e4edf8] font-['Liberation_Mono',monospace] text-[10px]">m1:100</div>
      </div>
      <div className="ml-[2px] flex">
        {["hand", "zoomPlain", "zoomWin", "zoomAll", "refresh", "fit"].map((n) => (
          <div key={n} className="flex w-[19.5px] justify-center">
            <G n={n} />
          </div>
        ))}
      </div>
    </div>
  )
}

function TaskButton({ w, label, active, icon }: { w: number; label: string; active?: boolean; icon: ReactNode }) {
  return (
    <div
      style={{ width: w }}
      className={`flex h-[24px] shrink-0 items-center gap-[5px] rounded-[2px] pl-[8px] text-[10.5px] ${active ? "bg-[#1e46a4] text-[#dfe9fb]" : "bg-[#3670e2] text-[#cfdcf5]"}`}
    >
      {icon}
      <span className="truncate">{label}</span>
    </div>
  )
}

const folderIcon = (
  <svg width="14" height="13" viewBox="0 0 14 13"><path d="M1 3h4l1 1h7v8H1z" fill="#f2d068" stroke="#a88a28" strokeWidth="0.6" /></svg>
)

function Taskbar() {
  return (
    <div className="flex h-[30px] items-center bg-gradient-to-b from-[#3a78e4] via-[#2458d0] to-[#1f4cc0]">
      <div className="flex h-full w-[85px] shrink-0 items-center gap-[4px] rounded-r-[10px] bg-gradient-to-b from-[#4fa84f] via-[#3b8f3b] to-[#2f7a35] pl-[9px] text-[16px] font-bold text-white italic">
        <svg width="16" height="15" viewBox="0 0 16 15">
          <path d="M1 2l6-1v6H1z" fill="#e8502c" />
          <path d="M8 1l7-1v7H8z" fill="#6cc040" />
          <path d="M1 8h6v6l-6-1z" fill="#3c8ae8" />
          <path d="M8 8h7v7l-7-1z" fill="#f4c828" />
        </svg>
        start
      </div>
      <div className="ml-[20px] flex w-[62px] shrink-0 items-center justify-between">
        <svg width="15" height="15" viewBox="0 0 15 15"><circle cx="7.5" cy="7.5" r="6" fill="#dfe8f6" /><path d="M5 7.5c0-4 6-4 6 0" fill="none" stroke="#4a80c8" strokeWidth="1.5" /></svg>
        <svg width="15" height="15" viewBox="0 0 15 15"><path d="M2 1h11v13H2z" fill="#f4f6fb" /><path d="M4 2h3v11H4zM8.5 2h3v11h-3z" fill="#2458d0" /></svg>
        <svg width="15" height="15" viewBox="0 0 15 15"><circle cx="7.5" cy="7.5" r="6.5" fill="#e07820" /><circle cx="8.5" cy="7" r="3.5" fill="#3858b8" /></svg>
      </div>
      <div className="ml-[37px] flex items-center gap-[3px]">
        <TaskButton w={143} label="IDM x32" icon={<svg width="12" height="15" viewBox="0 0 12 15"><path d="M1 1h10v13H1z" fill="#222" /><path d="M3 3h3v3H3z" fill="#d83030" /><path d="M7 3h2v3H7z" fill="#38b038" /><path d="M3 8h6v4H3z" fill="#e8c838" /></svg>} />
        <TaskButton w={135} label="\\mihanick\svn\help\..." icon={folderIcon} />
        <TaskButton w={143} label="C:\Documents and Se..." icon={folderIcon} />
        <TaskButton w={143} label="nanoCAD СПДС 5 - н..." active icon={<svg width="15" height="13" viewBox="0 0 16 14"><ellipse cx="8" cy="9" rx="7" ry="4" fill="#c6d6ea" /><circle cx="7" cy="5" r="3.5" fill="#8aa8cc" /></svg>} />
      </div>
      <span className="ml-[299px] w-[27px] text-center text-[10.5px] text-[#dbe6fb]">EN</span>
      <div className="flex h-full flex-1 items-center justify-center border-l border-[#103a90] bg-gradient-to-b from-[#27a0e8] to-[#1684d6] text-[10.5px] text-white">16:17</div>
    </div>
  )
}

const leftTools: Slot[] = ["line", "pline", "mline", 1.5, "poly", "rect", "arc", 3, "circle", 9.5, "cloud", 3, "spline", "ellipse", 9.5, "tile", 9.5, "block", "block", 8, "dot", 7.5, "table", 4.5, "bigT", 5.5, "rings"]
const rightTools: Slot[] = ["paint", "copy3", "mirror", "offset", "array", 7, "move", "rotate", 7, "scale", "stretch", 7, "trim", "extend", "break", "join", "join", "dimV", 7, "chamfer", "fillet", 7, "bomb", "bomb2", 11, "green", "green2", "ball", "ball2", "abc", "dimA", "dimB", "dimC"]

export default function App() {
  return (
    <div className="h-[720px] w-[1280px] overflow-hidden bg-black pl-[65px] font-['Liberation_Sans',sans-serif]">
      <div className="flex h-full w-[1151px] flex-col">
        <TitleBar />
        <MenuBar />
        <ToolRowOne />
        <ToolRowTwo />
        <div className="flex h-[579px] bg-[#c9dcf5]">
          <div className="flex min-w-0 flex-1 flex-col">
            <div className="flex h-[514px]">
              <div className="pt-[11px]">
                <div className="w-[21px] bg-gradient-to-r from-[#e6eefa] to-[#bcd3f2] pb-[10px]">
                  <VStrip items={leftTools} slot={17.5} />
                </div>
              </div>
              <PropertiesPanel />
              <div className="ml-[9px]">
                <DocArea />
              </div>
            </div>
            <CommandWindow />
          </div>
          <div className="h-full w-[21px] shrink-0 bg-gradient-to-r from-[#e6eefa] to-[#bcd3f2] pt-[9px]">
            <VStrip items={rightTools} slot={18.8} />
          </div>
        </div>
        <StatusBar />
        <Taskbar />
      </div>
    </div>
  )
}
